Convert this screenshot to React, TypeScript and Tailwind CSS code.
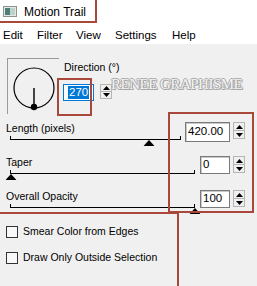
import React from "react";

const SANS = "font-['Liberation_Sans',Arial,sans-serif]";

function TitleIcon() {
  return (
    <svg width="14" height="11" viewBox="0 0 14 11">
      <rect x="0.5" y="0.5" width="13" height="10" fill="#e4e8e6" stroke="#8c9490" />
      <rect x="2" y="2" width="5" height="7" fill="#4f7f74" />
      <rect x="7" y="2" width="5" height="7" fill="#b9d2cc" />
    </svg>
  );
}

function Spinner({ h = "h-[17px]" }: { h?: string }) {
  return (
    <div className={`flex flex-col w-[12px] ${h} border border-[#b5b5b5] bg-[#f0f0f0]`}>
      <div className="flex-1 flex items-center justify-center border-b border-[#b5b5b5]">
        <svg width="7" height="4" viewBox="0 0 7 4">
          <polygon points="3.5,0 7,4 0,4" fill="#000" />
        </svg>
      </div>
      <div className="flex-1 flex items-center justify-center">
        <svg width="7" height="4" viewBox="0 0 7 4">
          <polygon points="0,0 7,0 3.5,4" fill="#000" />
        </svg>
      </div>
    </div>
  );
}

function Slider({ width, thumb }: { width: string; thumb: string }) {
  return (
    <div className={`relative ml-[10px] mt-[1px] h-[4px] ${width} border-l border-r border-b border-black`}>
      <div className={`absolute top-[4px] ${thumb} -translate-x-1/2`}>
        <svg width="11" height="6" viewBox="0 0 11 6">
          <polygon points="5.5,0 11,6 0,6" fill="#000" />
        </svg>
      </div>
    </div>
  );
}

function ParamRow({
  label,
  value,
  sliderWidth,
  thumb,
  inputW,
  inputH,
}: {
  label: string;
  value: string;
  sliderWidth: string;
  thumb: string;
  inputW: string;
  inputH: string;
}) {
  return (
    <div className="flex h-[34px]">
      <div className="flex-1">
        <div className="pl-[6px] h-[14px] leading-[14px] text-[10.5px]">{label}</div>
        <Slider width={sliderWidth} thumb={thumb} />
      </div>
      <div className="flex items-start mt-[1px] pr-[12px] gap-[3px]">
        <div
          className={`${inputW} ${inputH} bg-white border border-[#7a7a7a] shadow-[inset_1px_1px_0_#c8c8c8] flex items-center pl-[2px] text-[11.5px]`}
        >
          {value}
        </div>
        <Spinner />
      </div>
    </div>
  );
}

function Checkbox({ label }: { label: string }) {
  return (
    <div className="flex items-center h-[26px] pl-[6px]">
      <div className="w-[12px] h-[12px] border border-[#333] bg-[#f8f8f8]" />
      <span className="ml-[5px] text-[10.5px]">{label}</span>
    </div>
  );
}

export default function App() {
  return (
    <div className={`relative w-[257px] h-[286px] overflow-hidden bg-[#f0f0f0] text-black ${SANS}`}>
      {/* Title bar */}
      <div className="h-[23px] bg-white flex items-center pl-[3px]">
        <TitleIcon />
        <span className="ml-[7px] text-[12px]">Motion Trail</span>
      </div>

      {/* Menu bar */}
      <div className="h-[21px] bg-white flex items-center pt-[5px] text-[11.5px]">
        <span className="pl-[3px] w-[37px]">Edit</span>
        <span className="w-[39px]">Filter</span>
        <span className="w-[39px]">View</span>
        <span className="w-[57px]">Settings</span>
        <span>Help</span>
      </div>

      {/* Direction */}
      <div className="flex mt-[14px] h-[56px]">
        <div className="ml-[7px] w-[52px] h-[56px] border-t border-l border-[#9a9a9a] border-r-white border-b-white">
          <svg width="52" height="56" viewBox="0 0 52 56">
            <circle cx="26" cy="29" r="20" fill="none" stroke="#000" strokeWidth="1.2" />
            <line x1="26" y1="29" x2="26" y2="47" stroke="#444" strokeWidth="2" />
            <circle cx="26" cy="48" r="3.2" fill="#000" />
          </svg>
        </div>
        <div className="ml-[4px] flex flex-col">
          <div className="pl-[1px] mt-[2px] h-[14px] leading-[14px] text-[10.5px]">Direction (°)</div>
          <div className="flex items-start mt-[10px] gap-[6px]">
            <div className="w-[31px] h-[17px] bg-white border border-[#0078d7] flex items-center pl-[4px] text-[11.5px]">
              <span className="bg-[#0078d7] text-white px-[1px] leading-[13px]">270</span>
            </div>
            <Spinner h="h-[15px]" />
          </div>
        </div>
      </div>

      <div className="mt-[7px]">
        <ParamRow
          label="Length (pixels)"
          value="420.00"
          sliderWidth="w-[171px]"
          thumb="left-[138px]"
          inputW="w-[45px]"
          inputH="h-[20px]"
        />
        <ParamRow
          label="Taper"
          value="0"
          sliderWidth="w-[185px]"
          thumb="left-0"
          inputW="w-[30px]"
          inputH="h-[18px]"
        />
        <ParamRow
          label="Overall Opacity"
          value="100"
          sliderWidth="w-[185px]"
          thumb="left-[184px]"
          inputW="w-[30px]"
          inputH="h-[18px]"
        />
      </div>

      <div className="mt-[-4px]">
        <Checkbox label="Smear Color from Edges" />
        <Checkbox label="Draw Only Outside Selection" />
      </div>

      {/* Watermark */}
      <div className="absolute left-[111px] top-[77px] font-['Liberation_Serif','Times_New_Roman',serif] text-[15px] leading-none tracking-[-0.5px] text-[#f4f4f4] [text-shadow:1px_0_0_#a8a8a8,-1px_0_0_#a8a8a8,0_1px_0_#a8a8a8,0_-1px_0_#a8a8a8,1px_1px_0_#9a9a9a]">
        RENEE GRAPHISME
      </div>

      {/* Annotation boxes */}
      <div className="absolute left-[-2px] top-[-2px] w-[99px] h-[25px] border-2 border-[#a9473b]" />
      <div className="absolute left-[57px] top-[78px] w-[35px] h-[38px] border-2 border-[#a9473b]" />
      <div className="absolute left-[168px] top-[112px] w-[86px] h-[101px] border-2 border-[#a9473b]" />
      <div className="absolute left-[-2px] top-[212px] w-[181px] h-[80px] border-2 border-[#a9473b]" />
    </div>
  );
}
